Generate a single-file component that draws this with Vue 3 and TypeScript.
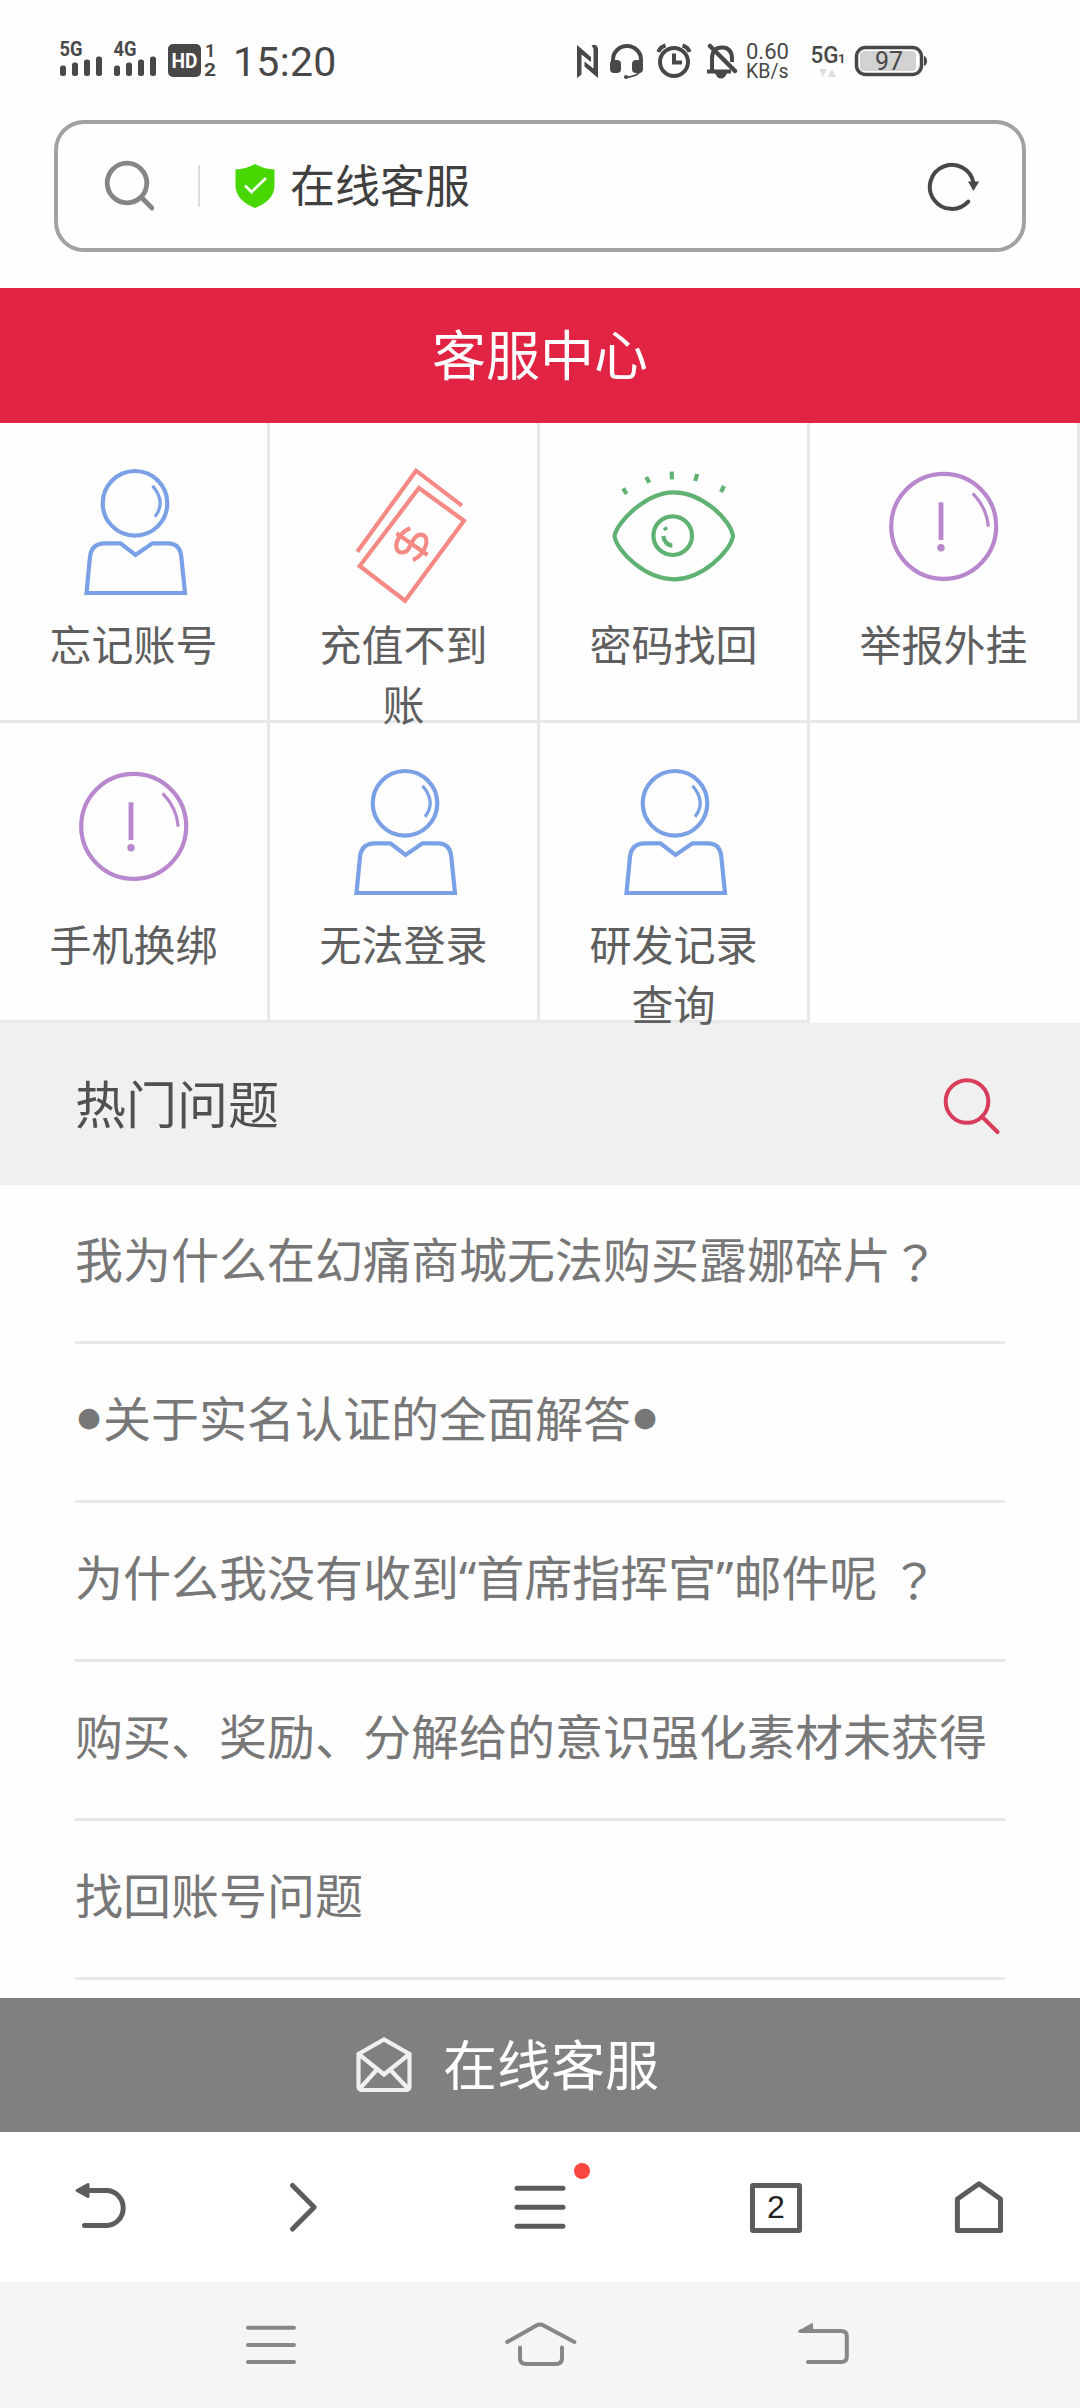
<template>
  <div class="screen">
    <!-- Status bar -->
    <header class="status-bar">
      <svg v-for="net in networks" :key="net" class="signal" width="44" height="46" viewBox="0 -6 44 46">
        <text class="net-label" x="0.500" y="16" textLength="23" lengthAdjust="spacingAndGlyphs">{{ net }}</text>
        <rect x="1" y="25.5" width="6" height="10.5" rx="2.5" />
        <rect x="13" y="22.5" width="6" height="13.5" rx="2.5" />
        <rect x="25" y="19.5" width="6" height="16.5" rx="2.5" />
        <rect x="37" y="16.5" width="6" height="19.5" rx="2.5" />
      </svg>
      <svg class="hd" width="36" height="40" viewBox="0 0 36 40">
        <rect x="1" y="4" width="33" height="33" rx="5" />
        <text class="hd-label" x="4.5" y="28" textLength="26" lengthAdjust="spacingAndGlyphs">HD</text>
      </svg>
      <svg class="sims" width="14" height="40" viewBox="0 0 14 40">
        <text class="sim-label" x="2" y="17">1</text>
        <text class="sim-label" x="1" y="36" textLength="12" lengthAdjust="spacingAndGlyphs">2</text>
      </svg>
      <span class="time">15:20</span>

      <div class="status-right">
        <svg class="nfc" width="24" height="40" viewBox="0 0 24 40">
          <path d="M1 5L15 17V22L5.500 14.500V34.500L1 38Z" />
          <path d="M22 38L8.500 26.500V21.500L17.500 28.500V9L15.500 5H20L22 8Z" />
        </svg>
        <svg class="headset" width="36" height="40" viewBox="0 0 36 40">
          <path class="line" d="M4 22V19.500A14 13.500 0 0 1 32 19.500V22" />
          <rect x="1" y="20" width="11" height="13" rx="4" />
          <rect x="23" y="20" width="11" height="13" rx="4" />
          <path class="thin" d="M31 31Q29 36 17 37.500" />
          <circle cx="17" cy="37" r="2" />
        </svg>
        <svg class="alarm" width="36" height="40" viewBox="0 0 36 40">
          <circle class="line" cx="18" cy="22" r="14" />
          <path class="line" d="M18 13.500V22.500H26" />
          <path class="line" d="M2.500 12Q4 7 9.500 5.500M33.500 12Q32 7 26.500 5.500" />
        </svg>
        <svg class="bell" width="32" height="40" viewBox="0 0 32 40">
          <path class="line" d="M6 31V19Q6 7.500 16 7.500T26 19V22M1 31.500H25" />
          <path d="M9 33H21Q19 38.500 15 38.500T9 33Z" />
          <path class="slash" d="M4 6L29 31" />
        </svg>
        <div class="speed">
          <span class="speed-value">0.60</span>
          <span class="speed-unit">KB/s</span>
        </div>
        <svg class="data" width="36" height="40" viewBox="0 0 36 40">
          <text class="data-label" x="0.500" y="23" textLength="28" lengthAdjust="spacingAndGlyphs">5G</text>
          <text class="data-sim" x="28" y="23">1</text>
          <path class="traffic" d="M9 29H17L13 37ZM18 37H26L22 29Z" />
        </svg>
        <svg class="battery" width="74" height="40" viewBox="0 0 74 40">
          <rect class="battery-case" x="2.500" y="7.500" width="65" height="27" rx="9" />
          <rect class="battery-level" x="6" y="11" width="56" height="20" rx="4" />
          <path d="M70 16Q73 17 73 21T70 26Z" />
          <text class="battery-label" x="21" y="30" textLength="28" lengthAdjust="spacingAndGlyphs">97</text>
        </svg>
      </div>
    </header>

    <!-- Address bar -->
    <div class="address-bar">
      <svg class="magnifier" width="52" height="56" viewBox="0 0 52 56">
        <circle cx="25" cy="25" r="19.800" />
        <path d="M39.500 39.500L50 50" />
      </svg>
      <span class="divider"></span>
      <svg class="shield" width="40" height="44" viewBox="0 0 40 44">
        <path d="M20 0Q29 5 39.500 5.500V23Q38 37 20 44Q2 37 0.500 23V5.500Q11 5 20 0Z" />
        <path class="check" d="M10 21.500L16.500 28L31 14" />
      </svg>
      <span class="page-title">在线客服</span>
      <svg class="refresh" width="56" height="52" viewBox="0 0 56 52">
        <path d="M42.200 41.600A22 22 0 1 1 47.500 23" />
        <path class="head" d="M42 21.500H53.200L47.400 31Z" />
      </svg>
    </div>

    <h1 class="banner">客服中心</h1>

    <!-- Self-service shortcuts -->
    <div class="services">
      <div v-for="item in services" :key="item.label" class="service">
        <svg class="service-icon" :class="item.icon" width="140" height="150" viewBox="0 0 140 150">
          <template v-if="item.icon === 'person'">
            <circle cx="71" cy="47.300" r="32.300" />
            <path class="shine" d="M88.500 29.700Q102.500 46 91 60.700" />
            <path d="M22.500 137L26 100.700Q27.500 87.300 41 87.300H56.500L71.500 99L88.500 87.300H104Q116 87.300 117.300 100.700L121 137Z" />
          </template>
          <template v-else-if="item.icon === 'money'">
            <path d="M23.300 95.700L82.100 14.700L127.900 49.700" />
            <path d="M84.900 32L130 64.700L71.100 144.700L25.700 110Z" />
            <path d="M76.300 72.300C68 75 61 85 62.500 92C64 98 72 98 75 92C79 84 82 77 89 79C96 82 92 98 79 104" />
            <path d="M62.500 77.300L93.500 99" />
          </template>
          <template v-else-if="item.icon === 'eye'">
            <path d="M10.500 80C13 66 42 36.300 69.800 36.300C98 36.300 127 64 129 80C127 95 98 123.300 69.800 123.300C42 123.300 13 96 10.500 80Z" />
            <circle cx="68.700" cy="79.700" r="19.300" />
            <path d="M59.200 80Q61 89 68.400 89.700M60.500 71.500L62.500 74" />
            <path d="M19.100 32.300L22.600 38M42.200 21L45.300 26.700M67.700 15.700L68 23.300M93.200 18L91.100 25M120 30L117 36" />
          </template>
          <template v-else>
            <circle cx="69.700" cy="70.300" r="52.500" />
            <path class="shine" d="M98.700 37.300Q113 52 114.200 70.700" />
            <path class="bang" d="M67 46.300V84" />
            <circle class="bang-dot" cx="67" cy="91.700" r="3.700" />
          </template>
        </svg>
        <p class="service-label">{{ item.label }}</p>
      </div>
    </div>

    <!-- Hot questions -->
    <div class="section-head">
      <h2>热门问题</h2>
      <svg class="section-search" width="60" height="60" viewBox="0 0 60 60">
        <circle cx="26" cy="27.500" r="21.300" />
        <path d="M40.800 42.500L56.500 58" />
      </svg>
    </div>
    <ul class="questions">
      <li v-for="q in questions" :key="q.text" class="question">
        <span v-if="q.dotted" class="dot">●</span>{{ q.text }}<span v-if="q.asks" class="mark">？</span><span v-if="q.dotted" class="dot">●</span>
      </li>
    </ul>

    <!-- Online service button -->
    <div class="online">
      <svg class="envelope" width="56" height="58" viewBox="0 0 56 58">
        <path d="M2.500 18L28 3.500L53.500 18V50Q53.500 54 49.500 54H6.500Q2.500 54 2.500 50Z" />
        <path d="M2.500 18L28 38.500L53.500 18M3.500 53L21 33.500M52.500 53L34 33.500" />
      </svg>
      <span class="online-label">在线客服</span>
    </div>

    <!-- Browser toolbar -->
    <nav class="toolbar">
      <svg width="54" height="54" viewBox="0 0 54 54">
        <path d="M13 10.500H33.500A17 17.500 0 0 1 33.500 45.400H10.500" />
        <path class="solid" d="M3 10.500L14 4.500V16.500Z" />
      </svg>
      <svg width="54" height="54" viewBox="0 0 54 54">
        <path d="M16.500 5.500L38.200 27.300L16.500 49" />
      </svg>
      <div class="menu">
        <svg width="54" height="54" viewBox="0 0 54 54">
          <path d="M4 8.300H50M4 27.300H50M4 46.300H50" />
        </svg>
        <span class="badge"></span>
      </div>
      <div class="tabs">2</div>
      <svg width="54" height="54" viewBox="0 0 54 54">
        <path d="M5.400 19L27 3.800L48.500 19V50.500H5.400Z" />
      </svg>
    </nav>

    <!-- System navigation -->
    <nav class="system-nav">
      <svg width="54" height="50" viewBox="0 0 54 50">
        <path d="M4 7.700H50M4 25H50M4 42H50" />
      </svg>
      <svg width="72" height="50" viewBox="0 0 72 50">
        <path d="M2.200 22L31 5.700Q35 3.500 39 5.700L69.400 22" />
        <path d="M15 27.500V38Q15 44 21 44H51Q57 44 57 38V27.500" />
      </svg>
      <svg width="54" height="50" viewBox="0 0 54 50">
        <path d="M5 11H45Q50.800 11 50.800 16V37Q50.800 42 45 42H12" />
        <path class="solid" d="M3 11.500L16 4V11.500Z" />
      </svg>
    </nav>
  </div>
</template>

<script setup lang="ts">
type ServiceIcon = 'person' | 'money' | 'eye' | 'alert';

interface Service {
  label: string;
  icon: ServiceIcon;
}

interface Question {
  text: string;
  dotted?: boolean; // wrapped in round bullets
  asks?: boolean; // ends with a question mark
}

const networks: string[] = ['5G', '4G'];

const services: Service[] = [
  { label: '忘记账号', icon: 'person' },
  { label: '充值不到账', icon: 'money' },
  { label: '密码找回', icon: 'eye' },
  { label: '举报外挂', icon: 'alert' },
  { label: '手机换绑', icon: 'alert' },
  { label: '无法登录', icon: 'person' },
  { label: '研发记录查询', icon: 'person' },
];

const questions: Question[] = [
  { text: '我为什么在幻痛商城无法购买露娜碎片', asks: true },
  { text: '关于实名认证的全面解答', dotted: true },
  { text: '为什么我没有收到“首席指挥官”邮件呢 ', asks: true },
  { text: '购买、奖励、分解给的意识强化素材未获得' },
  { text: '找回账号问题' },
];
</script>

<style>
body {
  background: #fefefe;
}
</style>

<style scoped>
.screen {
  display: flex;
  flex-direction: column;
  width: 1080px;
  height: 2408px;
  overflow: hidden;
  background: #fefefe;
  font-family: "Noto Sans", "Noto Sans CJK SC", sans-serif;
}

svg {
  display: block;
  flex: none;
}

/* Status bar */
.status-bar {
  display: flex;
  align-items: flex-start;
  box-sizing: border-box;
  height: 120px;
  padding: 40px 152px 0 59px;
  color: #484848;
  font-family: Roboto, sans-serif;
}

.status-bar svg {
  fill: #484848;
}

.signal {
  margin: -6px 10px 0 0;
}

.net-label {
  font-size: 20px;
  font-weight: 700;
}

.status-bar .hd-label {
  fill: #fff;
  font-size: 21px;
  font-weight: 700;
}

.sim-label {
  font-size: 18px;
  font-weight: 700;
}

.time {
  margin-left: 16px;
  font-size: 41px;
  letter-spacing: 0.3px;
  line-height: 45px;
}

.status-right {
  display: flex;
  margin-left: auto;
}

.status-bar .line {
  fill: none;
  stroke: #484848;
  stroke-width: 4;
}

.status-bar .thin {
  fill: none;
  stroke: #484848;
  stroke-width: 2;
}

.status-bar .slash {
  stroke: #484848;
  stroke-width: 4.5;
  stroke-linecap: round;
}

.headset {
  margin-left: 9px;
}

.alarm {
  margin-left: 11px;
}

.bell {
  margin-left: 14px;
}

.speed {
  display: flex;
  flex-direction: column;
  width: 44px;
  margin-left: 8px;
  margin-right: 1px;
}

.speed-value {
  font-size: 22px;
  line-height: 24px;
}

.speed-unit {
  font-size: 19.5px;
  line-height: 16px;
}

.data {
  margin-left: 19px;
}

.data-label {
  font-size: 24px;
  font-weight: 500;
}

.data-sim {
  font-size: 13px;
  font-weight: 700;
}

.status-bar .traffic {
  fill: #ddd;
}

.battery {
  margin-left: 8px;
}

.status-bar .battery-case {
  fill: none;
  stroke: #484848;
  stroke-width: 3.5;
}

.status-bar .battery-level {
  fill: #d2d2d2;
}

.battery-label {
  font-size: 25px;
}

/* Address bar */
.address-bar {
  display: flex;
  align-items: center;
  box-sizing: border-box;
  height: 132px;
  margin: 0 54px 36px;
  padding: 0 40px 0 44px;
  border: 4px solid #a2a2a2;
  border-radius: 30px;
}

.magnifier {
  fill: none;
  stroke: #858585;
  stroke-width: 4.8;
  stroke-linecap: round;
}

.divider {
  width: 2px;
  height: 42px;
  margin: 0 35px 0 44px;
  background: #ddd;
}

.shield {
  fill: #48d700;
}

.shield .check {
  fill: none;
  stroke: #f4fff0;
  stroke-width: 2.8;
}

.page-title {
  margin-left: 15px;
  color: #404040;
  font-size: 45px;
  line-height: 60px;
}

.refresh {
  margin-left: auto;
  fill: none;
  stroke: #484848;
  stroke-width: 4;
  stroke-linecap: round;
}

.refresh .head {
  fill: #484848;
  stroke: none;
}

.banner {
  height: 135px;
  margin: 0;
  background: #e12444;
  color: #fff;
  font-size: 54px;
  font-weight: 400;
  line-height: 135px;
  text-align: center;
}

/* Shortcuts */
.services {
  display: grid;
  grid-template-columns: repeat(4, 270px);
  grid-auto-rows: 300px;
}

.service {
  display: flex;
  flex-direction: column;
  align-items: center;
  box-sizing: border-box;
  padding-top: 33px;
  border-right: 3px solid #e8e8e8;
  border-bottom: 3px solid #e8e8e8;
}

.service-icon {
  fill: none;
  stroke-width: 4.2;
}

.shine {
  stroke-width: 3.2;
}

.person {
  stroke: #7aa0e6;
}

.money {
  stroke: #f58a85;
}

.eye {
  stroke: #5fb272;
}

.alert {
  stroke: #b987cd;
}

.bang {
  stroke-width: 4.8;
}

.bang-dot {
  fill: #b987cd;
  stroke: none;
}

.service-label {
  z-index: 1;
  width: 190px;
  margin: 9px 0 0;
  color: #5f5f5f;
  font-size: 42px;
  line-height: 60px;
  text-align: center;
}

/* Questions */
.section-head {
  display: flex;
  align-items: center;
  justify-content: space-between;
  height: 162px;
  padding: 0 79px 0 75px;
  background: #f0f0f0;
}

.section-head h2 {
  margin: 0;
  padding-bottom: 5px;
  color: #505050;
  font-size: 51px;
  font-weight: 400;
}

.section-search {
  fill: none;
  stroke: #d93c5b;
  stroke-width: 4;
  stroke-linecap: round;
}

.questions {
  height: 813px;
  margin: 0;
  padding: 0 75px;
  overflow: hidden;
  list-style: none;
}

.question {
  display: flex;
  align-items: center;
  box-sizing: border-box;
  height: 159px;
  padding-bottom: 6px;
  border-bottom: 3px solid #e8e8e8;
  color: #777;
  font-size: 48px;
  line-height: 60px;
  white-space: pre;
}

.dot {
  width: 28px;
  padding-bottom: 4px;
  font-family: "DejaVu Sans", sans-serif;
  font-size: 27px;
  text-align: center;
}

/* Traditional face centres the full-width mark in its box */
.mark {
  font-family: "Noto Sans CJK TC", sans-serif;
}

/* Online service */
.online {
  display: flex;
  align-items: center;
  height: 134px;
  padding-left: 356px;
  background: #808080;
  color: #fff;
  font-size: 54px;
}

.online-label {
  padding-bottom: 5px;
}

.envelope {
  margin-right: 31px;
  fill: none;
  stroke: #f0f0f0;
  stroke-width: 4.2;
}

/* Browser toolbar */
.toolbar {
  display: grid;
  grid-template-columns: 202px 202px 271px 202px 203px;
  align-items: center;
  justify-items: center;
  height: 150px;
  background: #fff;
}

.toolbar svg {
  fill: none;
  stroke: #5c5c5c;
  stroke-width: 5;
  stroke-linecap: round;
  stroke-linejoin: round;
}

.toolbar .solid {
  fill: #5c5c5c;
  stroke-width: 3;
}

.menu {
  position: relative;
}

.badge {
  position: absolute;
  top: -17px;
  right: -23px;
  width: 16px;
  height: 16px;
  border-radius: 50%;
  background: #fb4640;
}

.tabs {
  box-sizing: border-box;
  width: 52px;
  height: 50px;
  margin-top: 2px;
  border: 5px solid #5c5c5c;
  border-radius: 3px;
  color: #222;
  font-family: "Liberation Sans", Arial, sans-serif;
  font-size: 32px;
  line-height: 38px;
  text-align: center;
}

/* System navigation */
.system-nav {
  display: grid;
  grid-template-columns: 270px 270px 294px;
  align-items: center;
  justify-items: center;
  height: 126px;
  padding-left: 136px;
  background: #f5f5f5;
}

.system-nav svg {
  fill: none;
  stroke: #878787;
  stroke-width: 4;
  stroke-linecap: round;
  stroke-linejoin: round;
}

.system-nav .solid {
  fill: #878787;
  stroke-width: 2;
}
</style>
